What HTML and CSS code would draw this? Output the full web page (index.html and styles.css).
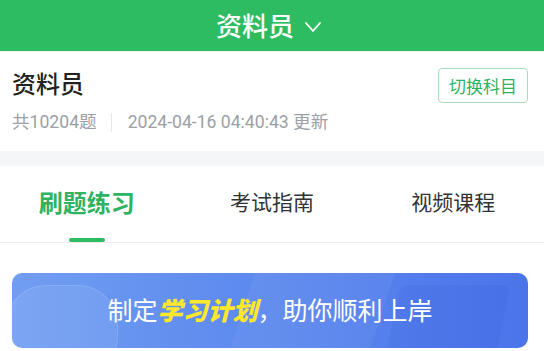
FILE: index.html
```html
<!DOCTYPE html>
<html lang="zh-CN">
<head>
    <meta charset="UTF-8">
    <meta name="viewport" content="width=device-width, initial-scale=1.0">
    <title>资料员</title>
    <link rel="stylesheet" href="styles.css">
</head>
<body>

    <div class="topbar">
        <span class="topbar-title">资料员</span>
        <svg class="chevron" width="18" height="12" viewBox="0 0 18 12"><path d="M2 2 L9 10 L16 2" fill="none" stroke="#fff" stroke-width="1.8" stroke-linecap="round" stroke-linejoin="round"/></svg>
    </div>

    <div class="subject">
        <div class="subject-head">
            <h2 class="subject-name">资料员</h2>
            <button class="switch-btn">切换科目</button>
        </div>
        <div class="subject-meta">
            <span>共10204题</span>
            <span class="divider"></span>
            <span>2024-04-16 04:40:43 更新</span>
        </div>
    </div>

    <div class="gap"></div>

    <div class="tabs">
        <div class="tab active">刷题练习</div>
        <div class="tab">考试指南</div>
        <div class="tab">视频课程</div>
    </div>

    <div class="banner-wrap">
        <div class="banner">
            <span class="deco deco-circle"></span>
            <span class="deco deco-slant"></span>
            <span class="deco deco-slant2"></span>
            <p class="banner-text">制定<em>学习计划</em>，助你顺利上岸</p>
        </div>
    </div>

</body>
</html>
```

FILE: styles.css
```css
body {
    font-family: Roboto, "Noto Sans CJK SC", sans-serif;
    margin: 0;
    background-color: #fff;
    color: #222;
    width: 544px;
    overflow: hidden;
}
.topbar {
    height: 51px;
    background-color: #2dbc62;
    display: flex;
    align-items: center;
    justify-content: center;
    gap: 10px;
    padding-right: 6px;
}
.topbar-title {
    color: #fff;
    font-size: 26px;
    font-weight: 500;
    line-height: 1;
    margin-top: 2px;
}
.chevron {
    margin-top: 2px;
}
.subject {
    padding: 16px 16px 0 12px;
    height: 83px;
    border-top: 1px solid #f3f4f5;
}
.subject-head {
    display: flex;
    justify-content: space-between;
    align-items: flex-start;
}
.subject-name {
    margin: 4px 0 0;
    font-size: 24px;
    font-weight: 500;
    line-height: 1.15;
    color: #222;
}
.switch-btn {
    width: 90px;
    height: 35px;
    border: 1px solid #a8dfba;
    border-radius: 4px;
    background-color: #fff;
    color: #2db361;
    font-family: inherit;
    font-size: 17px;
    padding: 0;
    margin-right: 0;
    margin-left: 1px;
}
.subject-meta {
    display: flex;
    align-items: center;
    margin-top: 7px;
    color: #9ba0a7;
    font-size: 17.6px;
    line-height: 24px;
}
.divider {
    width: 1px;
    height: 19px;
    background-color: #e6e7e9;
    margin: 0 16px 0 14px;
}
.gap {
    height: 15px;
    background-color: #f5f6f8;
}
.tabs {
    display: flex;
    height: 76px;
    border-bottom: 1px solid #eeeeee;
}
.tab {
    flex: 1;
    display: flex;
    justify-content: center;
    align-items: center;
    font-size: 21px;
    color: #333;
    position: relative;
    padding-bottom: 6px;
}
.tab.active {
    color: #2db361;
    font-size: 24px;
    font-weight: 700;
    margin-left: -4px;
    margin-right: 4px;
}
.tab.active::after {
    content: '';
    position: absolute;
    left: 50%;
    bottom: 0;
    width: 36px;
    height: 4px;
    margin-left: -18px;
    border-radius: 2px;
    background-color: #2dbc62;
}
.banner-wrap {
    padding: 30px 16px 0 12px;
}
.banner {
    position: relative;
    height: 75px;
    border-radius: 10px;
    overflow: hidden;
    background: linear-gradient(90deg, #719ef1 0%, #5b88ee 50%, #4c74ea 100%);
    display: flex;
    align-items: center;
    justify-content: center;
}
.deco {
    position: absolute;
}
.deco-circle {
    left: -6px;
    top: 12px;
    width: 110px;
    height: 90px;
    border-radius: 40px;
    background: rgba(255, 255, 255, 0.08);
    border: 1px solid rgba(255, 255, 255, 0.12);
}
.deco-slant {
    left: 230px;
    top: -10px;
    width: 140px;
    height: 100px;
    transform: skewX(-18deg);
    background: rgba(255, 255, 255, 0.05);
}
.deco-slant2 {
    left: 380px;
    top: 12px;
    width: 110px;
    height: 80px;
    transform: skewX(-12deg);
    background: rgba(30, 70, 200, 0.08);
    border-radius: 8px;
}
.banner-text {
    position: relative;
    margin: 0;
    color: #fff;
    font-size: 25px;
    line-height: 1;
    margin-top: 2px;
}
.banner-text em {
    font-style: italic;
    font-weight: 900;
    color: #ffe82a;
}
```
